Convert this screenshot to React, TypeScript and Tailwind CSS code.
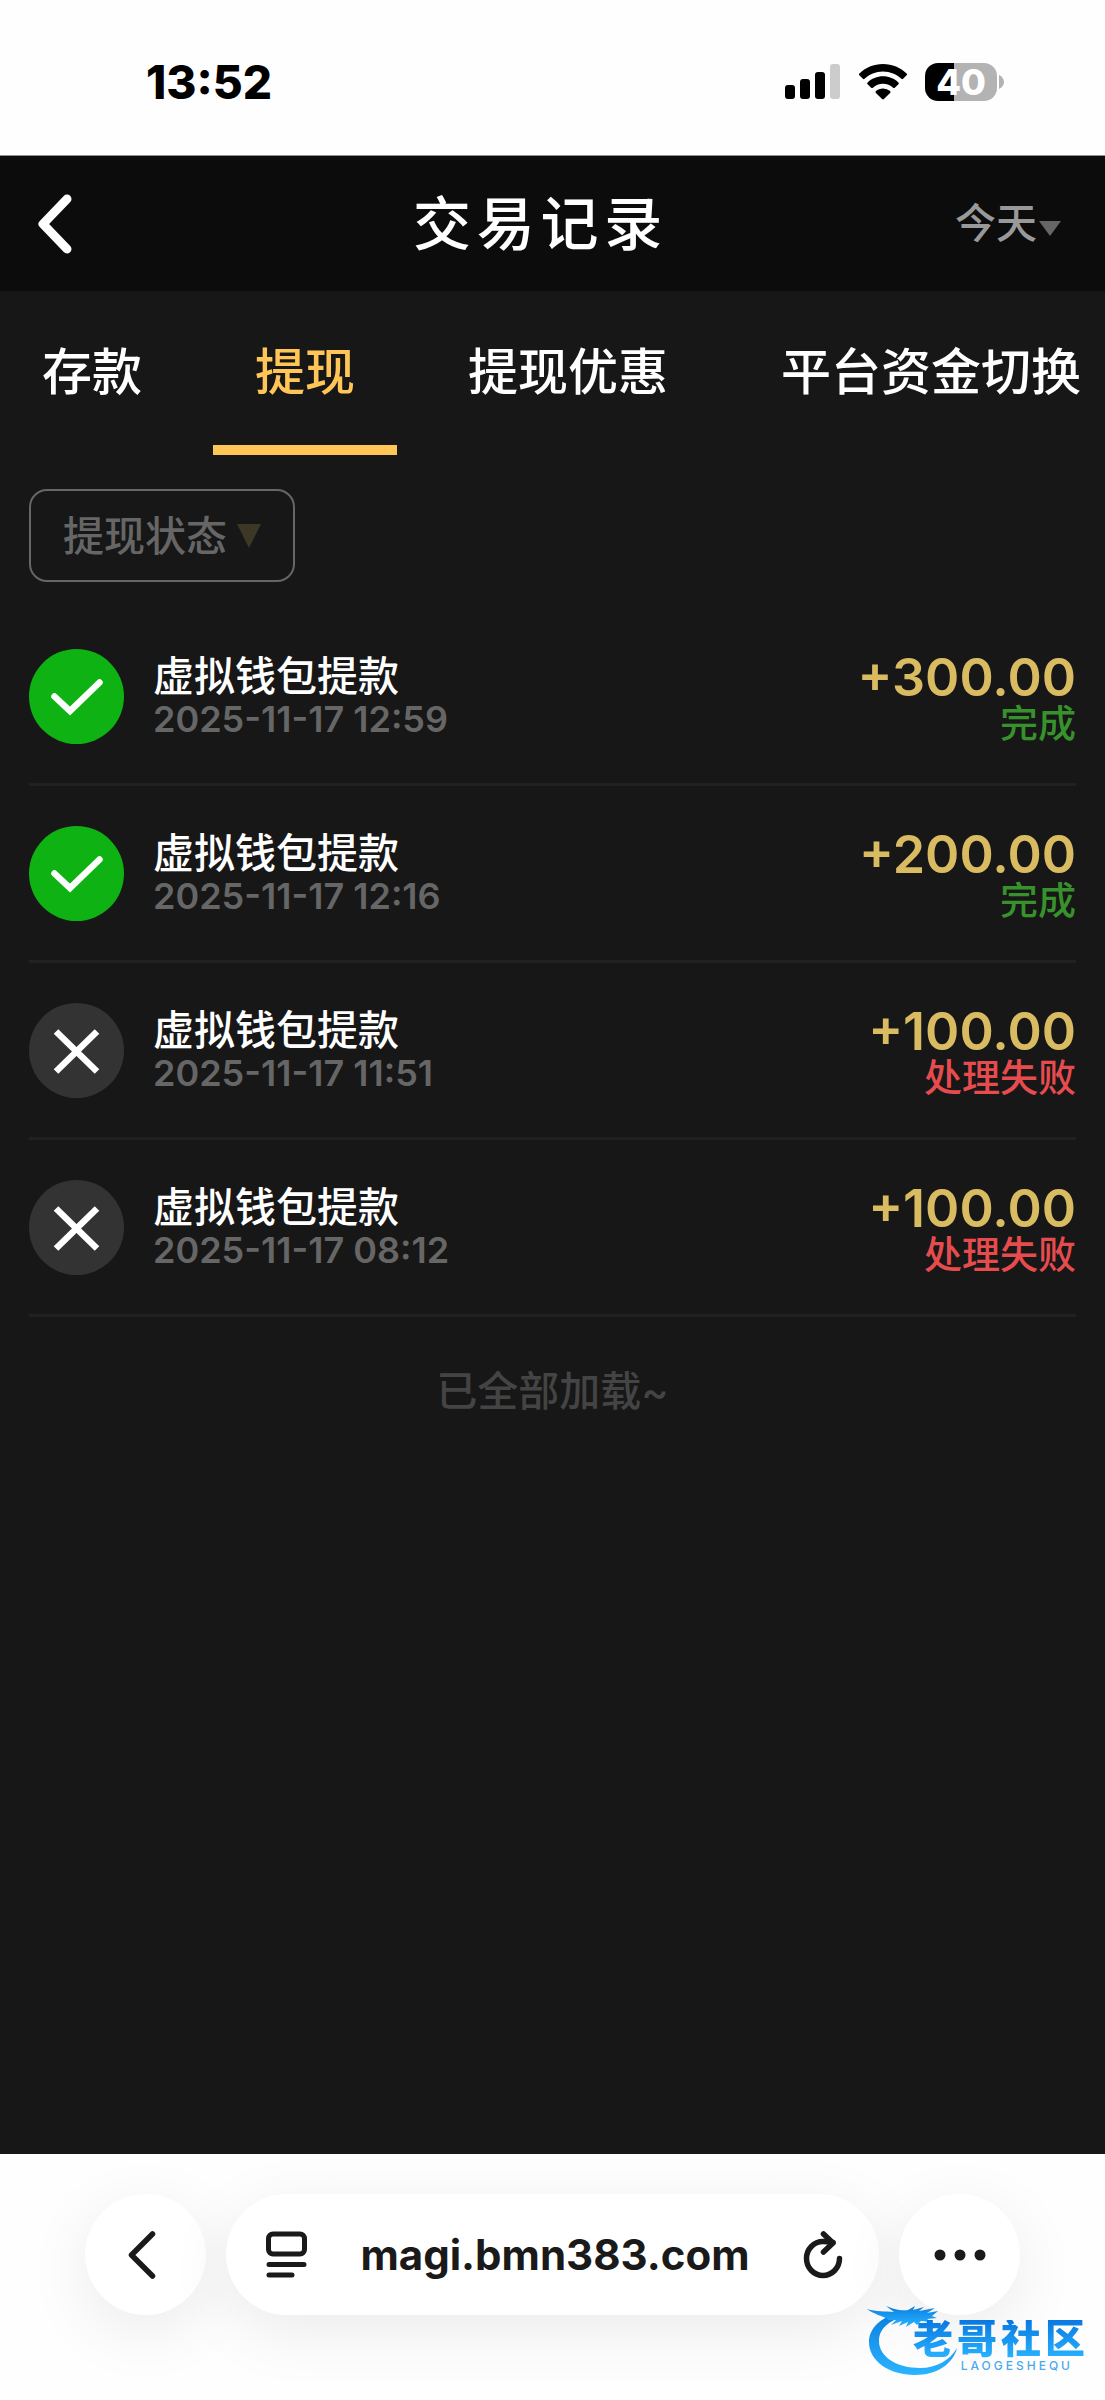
import { useState } from "react";

type Status = "done" | "failed";

interface Transaction {
  title: string;
  time: string;
  amount: string;
  status: Status;
}

const TABS = ["存款", "提现", "提现优惠", "平台资金切换"];

const TRANSACTIONS: Transaction[] = [
  { title: "虚拟钱包提款", time: "2025-11-17 12:59", amount: "+300.00", status: "done" },
  { title: "虚拟钱包提款", time: "2025-11-17 12:16", amount: "+200.00", status: "done" },
  { title: "虚拟钱包提款", time: "2025-11-17 11:51", amount: "+100.00", status: "failed" },
  { title: "虚拟钱包提款", time: "2025-11-17 08:12", amount: "+100.00", status: "failed" },
];

function StatusBar() {
  return (
    <div className="flex h-[155px] items-center justify-between bg-[#fefefe] pt-2 pr-[101px] pl-[146px] text-black">
      <span className="text-[46px] leading-none font-extrabold">13:52</span>
      <div className="flex items-center">
        <svg width="56" height="36" viewBox="0 0 56 36" aria-hidden="true">
          <rect x="0" y="21" width="10" height="14" rx="3" />
          <rect x="15" y="15" width="10" height="20" rx="3" />
          <rect x="30" y="8" width="10" height="27" rx="3" />
          <rect x="45" y="0" width="10" height="35" rx="3" fill="#cccccc" />
        </svg>
        <svg className="ml-[18px]" width="48" height="36" viewBox="0 0 48 36" aria-hidden="true">
          <path d="M24 0C14.700 0 6.300 3.700 .4 9.500a1.200 1.200 0 0 0 0 1.800l3.500 3.500c.5.500 1.200.5 1.700 0C10.300 10.200 16.800 7.400 24 7.400s13.700 2.800 18.400 7.400c.5.500 1.200.5 1.700 0l3.500-3.500a1.200 1.200 0 0 0 0-1.800C41.700 3.700 33.300 0 24 0Z" />
          <path d="M24 12.200c-6 0-11.400 2.300-15.400 6.200a1.200 1.200 0 0 0 0 1.800l3.600 3.500c.5.500 1.200.5 1.700.1A14.500 14.500 0 0 1 24 19.700c3.900 0 7.400 1.500 10.100 4.100.5.400 1.200.4 1.700-.1l3.600-3.500a1.200 1.200 0 0 0 0-1.800c-4-3.900-9.400-6.200-15.400-6.200Z" />
          <path d="M24 24.400c-2.700 0-5.200 1-7.100 2.700-.5.500-.5 1.300 0 1.800l6.200 6.100c.5.500 1.300.5 1.800 0l6.200-6.100c.5-.5.5-1.300 0-1.800A10.600 10.600 0 0 0 24 24.400Z" />
        </svg>
        <div className="ml-[18px] flex h-[38px] w-[72px] items-center justify-center rounded-[13px] bg-linear-to-r from-black from-40% to-[#b3b3b3] to-40% text-[36px] leading-none font-extrabold text-white">
          40
        </div>
        <svg className="ml-[2px]" width="5" height="14" viewBox="0 0 5 14" aria-hidden="true">
          <path d="M0 0c3 1.500 5 4 5 7s-2 5.500-5 7Z" fill="#b3b3b3" />
        </svg>
      </div>
    </div>
  );
}

function Header() {
  return (
    <header className="grid h-[136px] grid-cols-[1fr_auto_1fr] items-center border-t border-[#8e9292] bg-[#0c0c0c] pr-11 pl-5">
      <button type="button" aria-label="返回" className="justify-self-start px-[18px]">
        <svg width="34" height="60" viewBox="0 0 34 60" fill="none" stroke="white" strokeWidth="9" strokeLinecap="round" strokeLinejoin="round" aria-hidden="true">
          <path d="M29 5 5 30l24 25" />
        </svg>
      </button>
      <h1 className="text-[58px] leading-none font-medium tracking-widest text-white">交易记录</h1>
      <div className="flex items-center justify-self-end pb-0.5 text-[#999999]">
        <select aria-label="日期" className="h-16 appearance-none bg-transparent text-[41px] leading-[60px] font-medium">
          <option>今天</option>
        </select>
        <svg className="mt-3 ml-[2px]" width="22" height="15" viewBox="0 0 22 15" fill="#666666" aria-hidden="true">
          <path d="M0 0h22L11 15Z" />
        </svg>
      </div>
    </header>
  );
}

function Tabs() {
  const [active, setActive] = useState(1);
  return (
    <nav role="tablist" className="flex gap-[29px] overflow-hidden">
      {TABS.map((tab, index) => (
        <button
          key={tab}
          type="button"
          role="tab"
          aria-selected={index === active}
          onClick={() => setActive(index)}
          className={`h-[164px] shrink-0 border-b-[10px] px-[42px] pt-2 text-[50px] leading-none font-medium whitespace-nowrap ${
            index === active ? "border-[#ffc657] text-[#ffc657]" : "border-transparent text-white"
          }`}
        >
          {tab}
        </button>
      ))}
    </nav>
  );
}

function StatusIcon({ status }: { status: Status }) {
  if (status === "done") {
    return (
      <svg width="95" height="95" viewBox="0 0 95 95" fill="none" aria-hidden="true">
        <circle cx="47.500" cy="47.500" r="47.500" fill="#0eb313" />
        <path d="M25.500 47.500 41 62 70.500 33.500" stroke="white" strokeWidth="6.500" strokeLinecap="round" strokeLinejoin="miter" />
      </svg>
    );
  }
  return (
    <svg width="95" height="95" viewBox="0 0 95 95" fill="none" aria-hidden="true">
      <circle cx="47.500" cy="47.500" r="47.500" fill="#333333" />
      <path d="m27 28.500 41 40M68 28.500l-41 40" stroke="white" strokeWidth="6.500" />
    </svg>
  );
}

function TransactionRow({ item }: { item: Transaction }) {
  return (
    <li className="flex h-[177px] items-center border-b-[3px] border-[#212121]">
      <StatusIcon status={item.status} />
      <div className="ml-[29px] flex-1 pt-0.5">
        <p className="text-[41px] leading-[44px] font-medium text-white">{item.title}</p>
        <p className="text-[36px] leading-[42px] font-semibold text-[#666666]">{item.time}</p>
      </div>
      <div className="pt-1.5 text-right">
        <p className="text-[52px] leading-[48px] font-semibold text-[#d9bb62]">{item.amount}</p>
        <p className={`text-[38px] leading-[42px] font-medium ${item.status === "done" ? "text-[#37922b]" : "text-[#e64c4e]"}`}>
          {item.status === "done" ? "完成" : "处理失败"}
        </p>
      </div>
    </li>
  );
}

function BrowserBar() {
  const surface = "flex h-[121px] items-center rounded-full bg-white shadow-[0_16px_64px_rgba(0,0,0,0.08)]";
  return (
    <footer className="flex h-[246px] items-start gap-5 overflow-hidden bg-[#fefefe] px-[85px] pt-10 text-[#1a1a1a]">
      <button type="button" aria-label="后退" className={`${surface} w-[121px] shrink-0 justify-center pr-2`}>
        <svg width="28" height="50" viewBox="0 0 28 50" fill="none" stroke="currentColor" strokeWidth="5.500" strokeLinecap="round" strokeLinejoin="round" aria-hidden="true">
          <path d="M24.500 4 3.500 25l21 21" />
        </svg>
      </button>
      <div className={`${surface} min-w-0 flex-1 justify-between pr-9 pl-10`}>
        <button type="button" aria-label="页面菜单">
          <svg width="41" height="48" viewBox="0 0 41 48" fill="none" stroke="currentColor" strokeWidth="5" strokeLinecap="round" aria-hidden="true">
            <rect x="2.500" y="3" width="36" height="20" rx="4.500" />
            <path d="M3 33.500h35M3 44h23" />
          </svg>
        </button>
        <a href="https://magi.bmn383.com" className="text-[42px] leading-none font-bold">
          magi.bmn383.com
        </a>
        <button type="button" aria-label="重新加载">
          <svg width="40" height="48" viewBox="0 0 40 48" fill="none" stroke="currentColor" strokeWidth="5.500" strokeLinecap="round" strokeLinejoin="round" aria-hidden="true">
            <path d="M36.500 27.500A16.500 17 0 1 1 20 10.500c3.500 0 6 .3 10 1" />
            <path d="m20.500 3 9.500 9-9.500 9" />
          </svg>
        </button>
      </div>
      <button type="button" aria-label="更多" className={`${surface} w-[121px] shrink-0 justify-center`}>
        <svg width="52" height="12" viewBox="0 0 52 12" fill="currentColor" aria-hidden="true">
          <circle cx="6" cy="6" r="5.500" />
          <circle cx="26" cy="6" r="5.500" />
          <circle cx="46" cy="6" r="5.500" />
        </svg>
      </button>
    </footer>
  );
}

function CommunityLogo() {
  return (
    <div className="pointer-events-none absolute right-4 bottom-6 flex h-[74px] w-[222px] flex-col items-end">
      <svg className="absolute top-0 left-0" width="92" height="74" viewBox="0 0 92 74" aria-hidden="true">
        <defs>
          <linearGradient id="dragon" x1="0" y1="0" x2="0" y2="1">
            <stop offset="0" stopColor="#0a7fe0" />
            <stop offset="1" stopColor="#2bb4ff" />
          </linearGradient>
        </defs>
        <g fill="url(#dragon)">
          <path d="M32 11C14 15 2 26 2 40c0 19 20 33 46 33 22 0 38-11 42-27-7 12-20 20-37 20-23 0-41-11-41-27 0-12 10-21 25-24l5-4Z" />
          <path d="M0 7c9 3 18 2 27 3l-8-6c10 4 16 5 22 4l7-4-2 4 11-3-5 4 16-3-8 5 11-2-6 5 5 2-10 1 5 3-11-1-4 4-3-3-8 5 2-5-9 4 3-5-11 4 5-5-7 0C16 14 6 12 0 7Z" />
        </g>
      </svg>
      <span className="relative mt-[18px] bg-linear-to-b from-[#0a78e0] to-[#29b2ff] bg-clip-text text-[40px] leading-[38px] font-black tracking-widest text-transparent">
        老哥社区
      </span>
      <span className="relative mr-4 text-[12px] leading-[16px] font-medium tracking-[3px] text-[#4ba9ee]">LAOGESHEQU</span>
    </div>
  );
}

export default function App() {
  return (
    <div className="relative flex min-h-screen flex-col bg-[#171717] font-['Inter','Noto_Sans_CJK_SC',sans-serif]">
      <StatusBar />
      <Header />
      <main className="flex-1">
        <Tabs />
        <div className="px-[29px]">
          <div className="mt-[34px] mb-[27px] inline-grid items-center">
            <select
              aria-label="提现状态"
              className="col-start-1 row-start-1 h-[93px] appearance-none rounded-[18px] border-2 border-[#666666] bg-transparent pr-[66px] pl-8 text-[41px] leading-[60px] font-medium text-[#666666]"
            >
              <option>提现状态</option>
            </select>
            <svg className="pointer-events-none col-start-1 row-start-1 mr-[34px] justify-self-end" width="24" height="24" viewBox="0 0 24 24" fill="#3d3726" aria-hidden="true">
              <path d="M0 0h24L12 24Z" />
            </svg>
          </div>
          <ul>
            {TRANSACTIONS.map((item) => (
              <TransactionRow key={item.time} item={item} />
            ))}
          </ul>
          <p className="py-[52px] text-center text-[41px] leading-[44px] font-medium text-[#444444]">已全部加载~</p>
        </div>
      </main>
      <BrowserBar />
      <CommunityLogo />
    </div>
  );
}
